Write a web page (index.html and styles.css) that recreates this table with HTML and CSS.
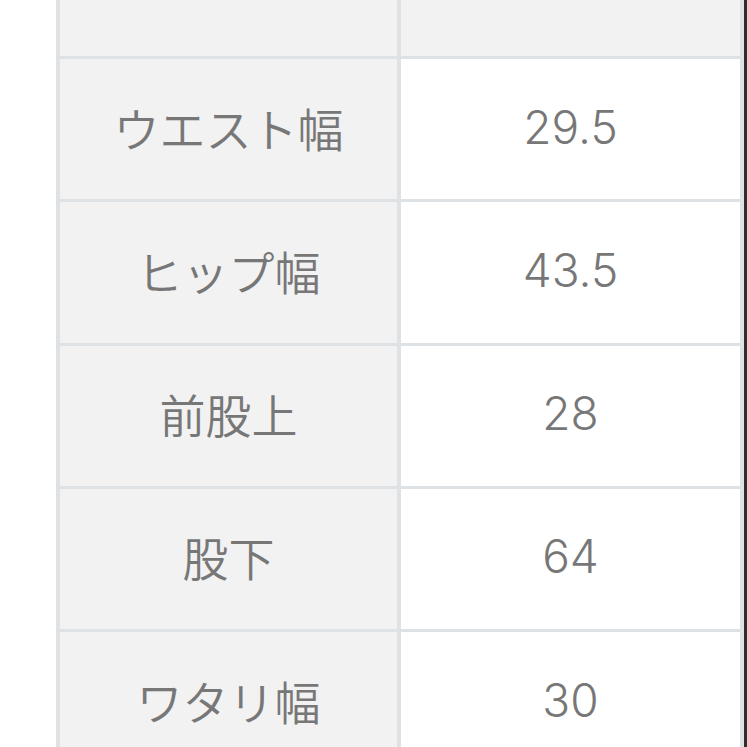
FILE: index.html
```html
<!DOCTYPE html>
<html lang="ja">
<head>
<meta charset="utf-8">
<title>サイズ表</title>
<link rel="stylesheet" href="styles.css">
</head>
<body>
<div class="frame">
  <div class="size-table">
    <div class="cell head label-head">サイズ</div>
    <div class="cell head value-head">M</div>
    <div class="cell label">ウエスト幅</div>
    <div class="cell value">29.5</div>
    <div class="cell label">ヒップ幅</div>
    <div class="cell value">43.5</div>
    <div class="cell label">前股上</div>
    <div class="cell value">28</div>
    <div class="cell label">股下</div>
    <div class="cell value">64</div>
    <div class="cell label">ワタリ幅</div>
    <div class="cell value">30</div>
  </div>
</div>
</body>
</html>
```
FILE: styles.css
```css
html, body {
  margin: 0;
  padding: 0;
  background: #ffffff;
}
.frame {
  box-sizing: border-box;
  width: 747px;
  height: 747px;
  overflow: hidden;
  padding-left: 56px;
  border-right: 3px solid #2e2e2e;
}
.size-table {
  display: grid;
  grid-template-columns: 337px 339px;
  grid-auto-rows: 140.25px;
  column-gap: 4px;
  row-gap: 3px;
  padding: 0 4px;
  background: #dfe2e5;
  margin-top: -84.25px;
  font-family: "Noto Sans CJK JP", "Noto Sans", sans-serif;
  font-size: 46px;
  font-weight: 350;
  color: #777777;
}
.cell {
  box-sizing: border-box;
  display: flex;
  align-items: center;
  justify-content: center;
  line-height: 1;
  padding-bottom: 5px;
}
.head {
  background: #f2f2f2;
  padding-bottom: 18px;
}
.label {
  background: #f2f2f2;
}
.value, .value-head {
  background: #ffffff;
  font-family: "Inter", "Noto Sans CJK JP", sans-serif;
  font-weight: 350;
}
.value-head {
  background: #f2f2f2;
}
```
